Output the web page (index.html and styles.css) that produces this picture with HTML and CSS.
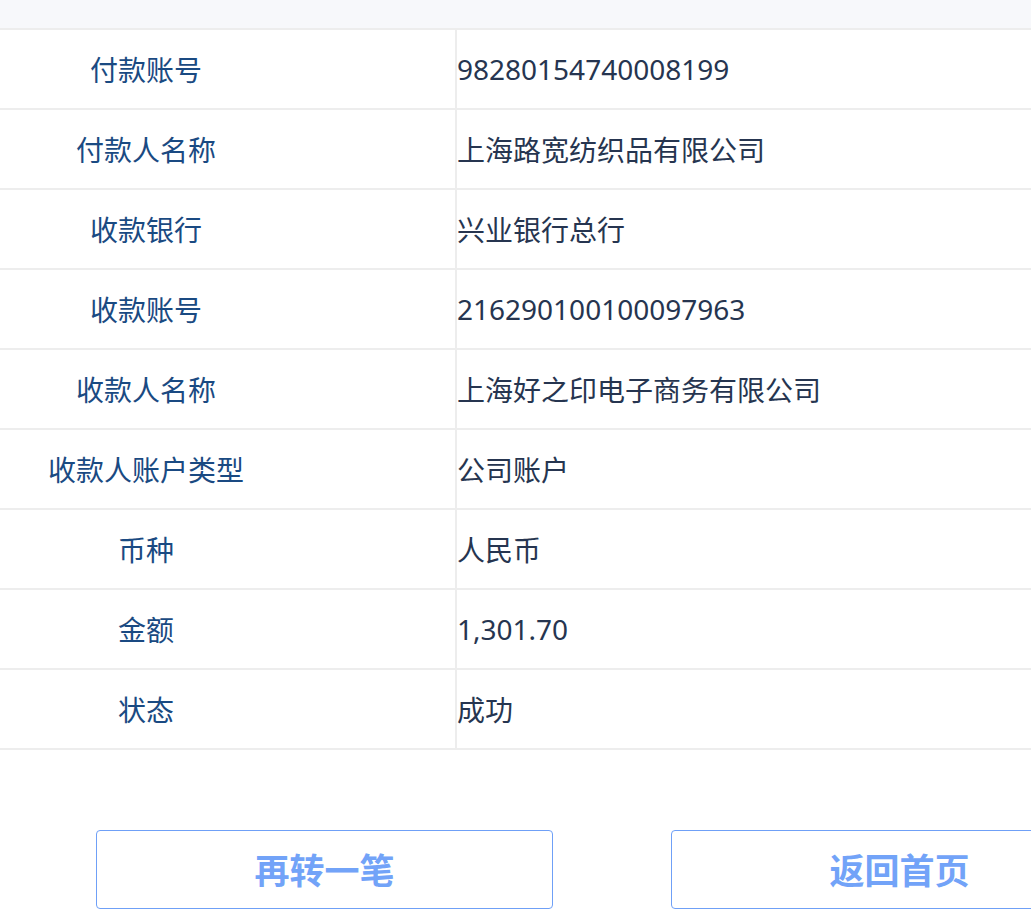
FILE: index.html
```html
<!DOCTYPE html>
<html lang="zh-CN">

<head>
  <meta charset="UTF-8">
  <meta name="viewport" content="width=device-width, initial-scale=1.0">
  <title>转账详情</title>
  <link rel="stylesheet" href="styles.css">
</head>

<body>
  <div class="page">
    <div class="top-bar"></div>

    <!-- 转账信息 -->
    <div class="detail">
      <div class="row">
        <div class="label"><span>付款账号</span></div>
        <div class="value">98280154740008199</div>
      </div>
      <div class="row">
        <div class="label"><span>付款人名称</span></div>
        <div class="value">上海路宽纺织品有限公司</div>
      </div>
      <div class="row">
        <div class="label"><span>收款银行</span></div>
        <div class="value">兴业银行总行</div>
      </div>
      <div class="row">
        <div class="label"><span>收款账号</span></div>
        <div class="value">216290100100097963</div>
      </div>
      <div class="row">
        <div class="label"><span>收款人名称</span></div>
        <div class="value">上海好之印电子商务有限公司</div>
      </div>
      <div class="row">
        <div class="label"><span>收款人账户类型</span></div>
        <div class="value">公司账户</div>
      </div>
      <div class="row">
        <div class="label"><span>币种</span></div>
        <div class="value">人民币</div>
      </div>
      <div class="row">
        <div class="label"><span>金额</span></div>
        <div class="value">1,301.70</div>
      </div>
      <div class="row">
        <div class="label"><span>状态</span></div>
        <div class="value">成功</div>
      </div>
    </div>

    <div class="actions">
      <button class="btn">再转一笔</button>
      <button class="btn">返回首页</button>
    </div>
  </div>
</body>

</html>
```

FILE: styles.css
```css
html,
body {
  margin: 0;
  padding: 0;
  overflow: hidden;
  background-color: #fff;
}

body {
  font-family: "Noto Sans", "Noto Sans CJK SC", sans-serif;
}

.page {
  width: 1224px;
}

.top-bar {
  height: 28px;
  background-color: #f7f8fb;
}

.detail {
  border-top: 2px solid #ededed;
}

.row {
  display: flex;
  height: 78px;
  border-bottom: 2px solid #ededed;
}

.label {
  width: 455px;
  border-right: 2px solid #ededed;
  display: flex;
  align-items: center;
}

.label span {
  width: 292px;
  text-align: center;
  font-size: 28px;
  color: #1a4a82;
}

.value {
  flex: 1;
  display: flex;
  align-items: center;
  font-size: 28px;
  color: #263550;
}

/* 底部按钮 */
.actions {
  display: flex;
  justify-content: center;
  gap: 118px;
  margin-top: 80px;
}

.btn {
  width: 457px;
  height: 79px;
  padding: 0 0 3px;
  background-color: #fff;
  border: 1px solid #6fa0f7;
  border-radius: 4px;
  font-family: "Noto Sans CJK SC", sans-serif;
  font-size: 35px;
  font-weight: bold;
  color: #72a3f8;
  cursor: pointer;
}
```
